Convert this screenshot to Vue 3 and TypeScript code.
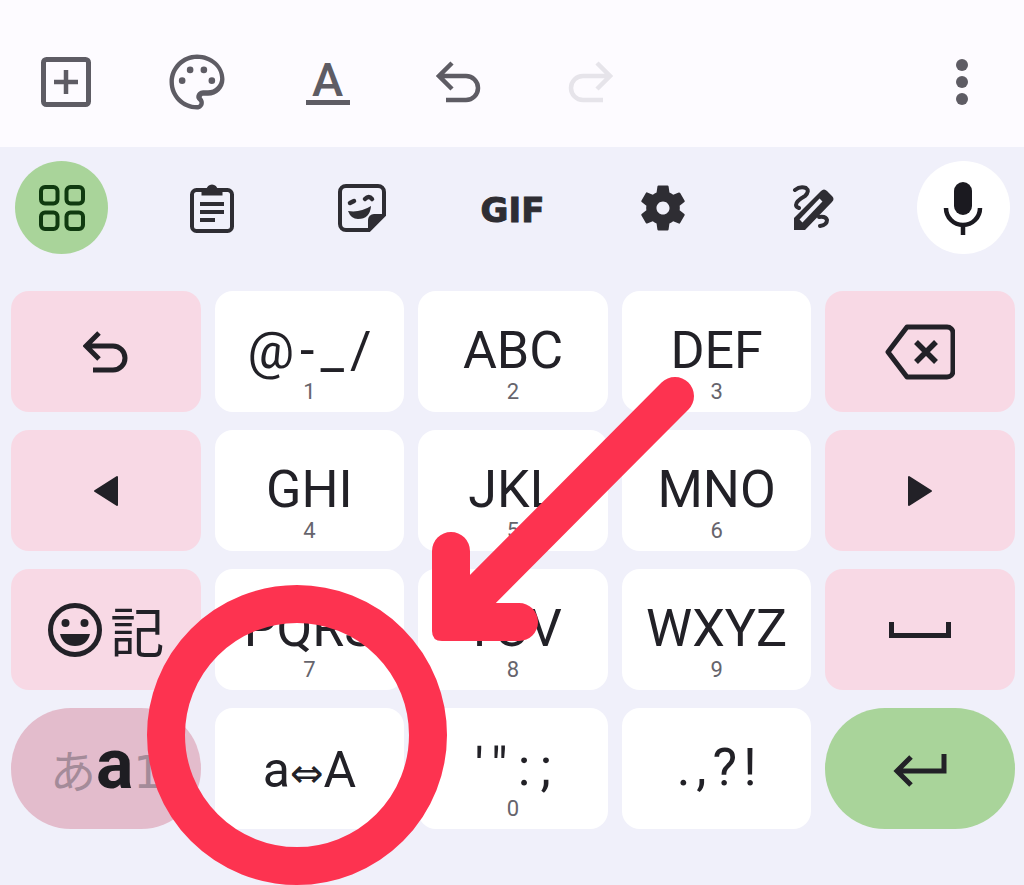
<script setup lang="ts">
// 12-key Japanese keyboard with the editor toolbar above it and a red
// annotation (arrow + ring) drawn over the a<->A key.

interface Key {
  label?: string;
  digit?: string;
  icon?: string;
  kind?: string;
  spacing?: string;
}

const keys: Key[] = [
  { icon: "undo", kind: "fn" },
  { label: "@-_/", digit: "1", spacing: "wide" },
  { label: "ABC", digit: "2" },
  { label: "DEF", digit: "3" },
  { icon: "backspace", kind: "fn" },
  { icon: "left", kind: "fn" },
  { label: "GHI", digit: "4" },
  { label: "JKL", digit: "5" },
  { label: "MNO", digit: "6" },
  { icon: "right", kind: "fn" },
  { icon: "emoji", kind: "fn" },
  { label: "PQRS", digit: "7" },
  { label: "TUV", digit: "8" },
  { label: "WXYZ", digit: "9" },
  { icon: "space", kind: "fn" },
  { icon: "mode", kind: "mode" },
  { icon: "case" },
  { label: "'\":;", digit: "0", spacing: "wider" },
  { label: ".,?!", spacing: "wide" },
  { icon: "enter", kind: "enter" },
];
</script>

<template>
  <div class="screen">
    <header class="toolbar">
      <button class="tool">
        <svg width="52" height="52" viewBox="0 0 52 52" fill="none" stroke="currentColor" stroke-width="5">
          <rect x="3.5" y="3.5" width="45" height="45" rx="3" />
          <path d="M26 14v24M14 26h24" stroke-width="4.5" />
        </svg>
      </button>
      <button class="tool">
        <svg width="66" height="66" viewBox="0 0 24 24" fill="currentColor">
          <path d="M12 22C6.49 22 2 17.51 2 12S6.49 2 12 2s10 4.04 10 9c0 3.31-2.69 6-6 6h-1.77c-.28 0-.5.22-.5.5 0 .12.05.23.13.33.41.47.64 1.06.64 1.67 0 1.38-1.12 2.5-2.5 2.5zm0-18.4c-4.63 0-8.4 3.77-8.4 8.4s3.77 8.4 8.4 8.4c.28 0 .9-.22.9-.9 0-.16-.08-.28-.14-.35-.41-.46-1.03-1.05-1.03-1.65 0-1.38 1.12-2.5 2.5-2.5H16c2.43 0 4.4-1.97 4.4-4.4 0-4.08-3.77-7-8.4-7z" />
          <circle cx="6.6" cy="11.5" r="1.2" />
          <circle cx="9.5" cy="7.6" r="1.2" />
          <circle cx="14.5" cy="7.6" r="1.2" />
          <circle cx="17.4" cy="11.5" r="1.2" />
        </svg>
      </button>
      <button class="tool">
        <span class="format-a">A</span>
      </button>
      <button class="tool">
        <svg width="46" height="44" viewBox="0 0 46 44" fill="none" stroke="currentColor" stroke-width="4.5">
          <path d="M16 3 3 16l13 13M3 16h27a12 12 0 0 1 0 24H10" />
        </svg>
      </button>
      <button class="tool tool-off">
        <svg width="46" height="44" viewBox="0 0 46 44" fill="none" stroke="currentColor" stroke-width="4.5">
          <path d="M30 3l13 13-13 13M43 16H16a12 12 0 0 0 0 24h20" />
        </svg>
      </button>
      <button class="tool tool-menu">
        <svg width="14" height="48" viewBox="0 0 14 48" fill="currentColor">
          <circle cx="7" cy="7" r="6" />
          <circle cx="7" cy="24" r="6" />
          <circle cx="7" cy="41" r="6" />
        </svg>
      </button>
    </header>

    <main class="keyboard">
      <div class="strip">
        <button class="strip-btn strip-apps">
          <svg width="48" height="48" viewBox="0 0 48 48" fill="none" stroke="currentColor" stroke-width="4">
            <rect x="3" y="3" width="16.5" height="16.5" rx="4" />
            <rect x="28.5" y="3" width="16.5" height="16.5" rx="4" />
            <rect x="3" y="28.5" width="16.5" height="16.5" rx="4" />
            <rect x="28.5" y="28.5" width="16.5" height="16.5" rx="4" />
          </svg>
        </button>
        <button class="strip-btn">
          <svg width="46" height="50" viewBox="0 0 46 50" fill="none" stroke="currentColor" stroke-width="4">
            <rect x="3" y="7" width="40" height="41" rx="4.5" />
            <path d="M14 11V7h5a4 4 0 0 1 8 0h5v4z" fill="currentColor" stroke-width="3" />
            <path d="M11 21h24M11 29h24M11 37h15" />
          </svg>
        </button>
        <button class="strip-btn">
          <svg width="50" height="50" viewBox="0 0 50 50" fill="none" stroke="currentColor" stroke-width="4">
            <path d="M9 3h32a6 6 0 0 1 6 6v23L32 47H9a6 6 0 0 1-6-6V9a6 6 0 0 1 6-6z" />
            <path d="M47 31 31 47V37a6 6 0 0 1 6-6z" fill="currentColor" stroke="none" />
            <path d="M13 20l4-2M28 16q4-4 7 0" stroke-width="4.5" stroke-linecap="round" />
            <path d="M11 28q12 2 23-5-1 13-13 13-7 0-10-8z" fill="currentColor" stroke="none" />
          </svg>
        </button>
        <button class="strip-btn"><span class="gif">GIF</span></button>
        <button class="strip-btn">
          <svg width="56" height="56" viewBox="0 0 24 24" fill="currentColor">
            <path d="M19.14 12.94c.04-.3.06-.61.06-.94 0-.32-.02-.64-.07-.94l2.03-1.58c.18-.14.23-.41.12-.61l-1.92-3.32c-.12-.22-.37-.29-.59-.22l-2.39.96c-.5-.38-1.03-.7-1.62-.94l-.36-2.54c-.04-.24-.24-.41-.48-.41h-3.84c-.24 0-.43.17-.47.41l-.36 2.54c-.59.24-1.13.57-1.62.94l-2.39-.96c-.22-.08-.47 0-.59.22L2.74 8.87c-.12.21-.08.47.12.61l2.03 1.58c-.05.3-.09.63-.09.94s.02.64.07.94l-2.03 1.58c-.18.14-.23.41-.12.61l1.92 3.32c.12.22.37.29.59.22l2.39-.96c.5.38 1.03.7 1.62.94l.36 2.54c.05.24.24.41.48.41h3.84c.24 0 .44-.17.47-.41l.36-2.54c.59-.24 1.13-.56 1.62-.94l2.39.96c.22.08.47 0 .59-.22l1.92-3.32c.12-.22.07-.47-.12-.61l-2.01-1.58zM12 14.8c-1.54 0-2.8-1.26-2.8-2.8s1.26-2.8 2.8-2.8 2.8 1.26 2.8 2.8-1.26 2.8-2.8 2.8z" />
          </svg>
        </button>
        <button class="strip-btn">
          <svg width="46" height="48" viewBox="0 0 46 48" fill="none">
            <path d="M4 46V34L31 7q3-3 6 0l5 5q3 3 0 6L15 46z" fill="currentColor" />
            <path d="M11 37 31 16" stroke="#f0f0fa" stroke-width="4" />
            <path d="M5 6q5-4 11-2 4 3-1 8-9 5-9 9 0 2 3 3M29 33q7-1 8 3 0 5-7 6" stroke="currentColor" stroke-width="4" stroke-linecap="round" />
          </svg>
        </button>
        <button class="strip-btn strip-mic">
          <svg width="40" height="54" viewBox="0 0 40 54" fill="none" stroke="currentColor">
            <rect x="11" y="1" width="18" height="33" rx="9" fill="currentColor" stroke="none" />
            <path d="M3 27a17 17 0 0 0 34 0M20 44v10" stroke-width="4.5" />
          </svg>
        </button>
      </div>

      <div class="grid">
        <button v-for="(key, i) in keys" :key="i" class="key" :class="key.kind">
          <template v-if="key.label">
            <span class="label" :class="key.spacing">{{ key.label }}</span>
            <span class="digit">{{ key.digit }}</span>
          </template>

          <svg v-else-if="key.icon === 'undo'" width="46" height="44" viewBox="0 0 46 44" fill="none" stroke="currentColor" stroke-width="5">
            <path d="M16 3 3 16l13 13M3 16h27a12 12 0 0 1 0 24H10" />
          </svg>
          <svg v-else-if="key.icon === 'backspace'" width="70" height="56" viewBox="0 0 70 56" fill="none" stroke="currentColor" stroke-width="5" stroke-linejoin="round">
            <path d="M22 3h40a6 6 0 0 1 6 6v38a6 6 0 0 1-6 6H22L3 28z" />
            <path d="M31 18l20 20M51 18 31 38" stroke-width="5.5" />
          </svg>
          <svg v-else-if="key.icon === 'left'" width="26" height="32" viewBox="0 0 26 32" fill="currentColor" stroke="currentColor" stroke-width="2" stroke-linejoin="round">
            <path d="M24 2v28L2 16z" />
          </svg>
          <svg v-else-if="key.icon === 'right'" width="26" height="32" viewBox="0 0 26 32" fill="currentColor" stroke="currentColor" stroke-width="2" stroke-linejoin="round">
            <path d="M2 2v28l22-14z" />
          </svg>
          <div v-else-if="key.icon === 'emoji'" class="emoji-key">
            <svg width="56" height="56" viewBox="0 0 56 56">
              <circle cx="28" cy="28" r="24.5" fill="none" stroke="currentColor" stroke-width="5" />
              <circle cx="18.5" cy="21" r="4" fill="currentColor" />
              <circle cx="37.5" cy="21" r="4" fill="currentColor" />
              <path d="M13 32h30q-3 12-15 12T13 32z" fill="currentColor" />
            </svg>
            <span class="kanji">記</span>
          </div>
          <svg v-else-if="key.icon === 'space'" width="62" height="16" viewBox="0 0 62 16" fill="none" stroke="currentColor" stroke-width="5">
            <path d="M2.5 0v13.5h57V0" />
          </svg>
          <div v-else-if="key.icon === 'mode'" class="mode-key">
            <span class="mode-kana">あ</span><span class="mode-a">a</span><span class="mode-one">1</span>
          </div>
          <span v-else-if="key.icon === 'case'" class="case-key">a<span class="case-arrows">⇔</span>A</span>
          <svg v-else-if="key.icon === 'enter'" class="enter-icon" width="54" height="36" viewBox="0 0 54 36" fill="none" stroke="currentColor" stroke-width="5">
            <path d="M51 1v17H5M18 4 4 18l14 14" />
          </svg>
        </button>
      </div>
    </main>

    <svg class="annotation" width="1024" height="885" viewBox="0 0 1024 885" fill="none">
      <circle cx="297" cy="735" r="131" stroke="#fd3350" stroke-width="38" />
      <path d="M675 396 456 616" stroke="#fd3350" stroke-width="38" stroke-linecap="round" />
      <path d="M432 551a19 19 0 0 1 38 0v52h49a19 19 0 0 1 0 38h-77q-10 0-10-10z" fill="#fd3350" />
    </svg>
  </div>
</template>

<style scoped>
.screen {
  position: relative;
  width: 1024px;
  height: 885px;
  overflow: hidden;
  background: #f0f0fa;
  font-family: Roboto, "Liberation Sans", sans-serif;
}

button {
  border: 0;
  padding: 0;
  background: none;
  font: inherit;
  color: inherit;
}

.toolbar {
  display: flex;
  height: 147px;
  background: #fdfbff;
  color: #5e5c64;
}
.tool {
  display: flex;
  align-items: center;
  justify-content: center;
  width: 131px;
  height: 164px;
}
.tool-off {
  color: #e6e4ea;
}
.tool-menu {
  width: 124px;
  margin-left: auto;
}
.format-a {
  width: 44px;
  margin-top: -1px;
  border-bottom: 5px solid currentColor;
  font-size: 47px;
  font-weight: 500;
  line-height: 41px;
  text-align: center;
}

.keyboard {
  color: #1e1d22;
}
.strip {
  display: flex;
  align-items: center;
  justify-content: space-between;
  padding: 14px 14px 37px 15px;
}
.strip-btn {
  display: flex;
  align-items: center;
  justify-content: center;
  width: 93px;
  height: 93px;
  border-radius: 50%;
  color: #2e2d33;
}
.strip-apps {
  background: #a9d49a;
  color: #103a10;
}
.strip-mic {
  background: #fff;
  color: #1b1a20;
}
.gif {
  margin-top: 4px;
  font-family: "DejaVu Sans", sans-serif;
  font-size: 34px;
  font-weight: 700;
  line-height: 1;
  -webkit-text-stroke: 1px currentColor;
}

.grid {
  display: grid;
  grid-template-columns: repeat(5, 1fr);
  grid-auto-rows: 121px;
  gap: 18px 14px;
  padding: 0 9px 0 11px;
}
.key {
  display: flex;
  flex-direction: column;
  align-items: center;
  justify-content: center;
  border-radius: 18px;
  background: #fff;
  color: #222127;
}
.key.fn {
  background: #f8d9e5;
}
.key.mode {
  border-radius: 60px;
  background: #e3bccc;
}
.key.enter {
  border-radius: 60px;
  background: #a9d49a;
}
.label {
  height: 60px;
  margin-top: 10px;
  font-size: 52px;
  line-height: 60px;
  white-space: nowrap;
}
.label.wide {
  margin-right: -6px;
  letter-spacing: 6px;
}
.label.wider {
  margin-right: -10px;
  letter-spacing: 10px;
}
.digit {
  height: 22px;
  margin-bottom: -10px;
  font-size: 22px;
  line-height: 22px;
  color: #66646c;
}

.emoji-key {
  display: flex;
  align-items: center;
  gap: 7px;
}
.kanji {
  font-family: "Noto Sans CJK JP", sans-serif;
  font-size: 54px;
  line-height: 60px;
}
.mode-key {
  display: flex;
  align-items: baseline;
  line-height: 70px;
}
.mode-kana {
  font-family: "Noto Sans CJK JP", sans-serif;
  font-size: 46px;
  color: #a48b99;
}
.mode-a {
  font-size: 70px;
  font-weight: 700;
  color: #1e1d22;
}
.mode-one {
  font-family: "DejaVu Sans", sans-serif;
  font-size: 44px;
  color: #a48b99;
}
.case-key {
  margin-top: 6px;
  font-size: 50px;
  line-height: 60px;
  white-space: nowrap;
}
.case-arrows {
  font-family: "DejaVu Sans", sans-serif;
  font-size: 40px;
}
.enter-icon {
  margin-top: 4px;
}

.annotation {
  position: absolute;
  top: 0;
  left: 0;
  pointer-events: none;
}
</style>
